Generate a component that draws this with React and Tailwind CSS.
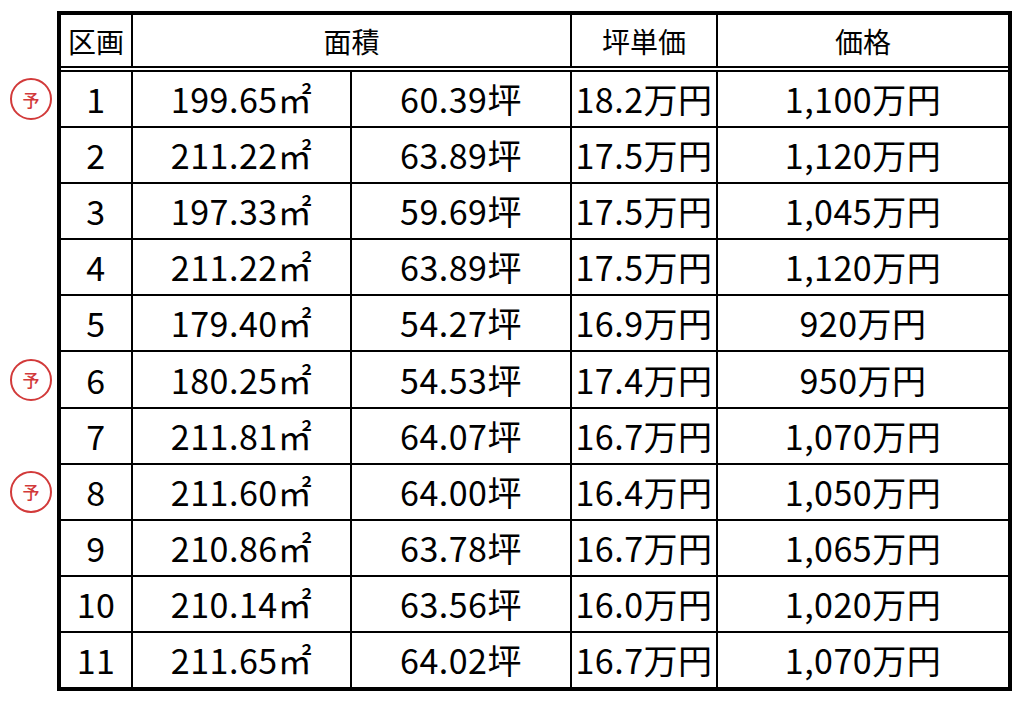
// 区画ごとの面積・坪単価・価格の一覧表
const FONT = "font-['Noto_Sans_CJK_JP','Noto_Sans',sans-serif]";

const rows = [
  { no: "1", m2: "199.65", tsubo: "60.39", unit: "18.2", price: "1,100", yo: true },
  { no: "2", m2: "211.22", tsubo: "63.89", unit: "17.5", price: "1,120" },
  { no: "3", m2: "197.33", tsubo: "59.69", unit: "17.5", price: "1,045" },
  { no: "4", m2: "211.22", tsubo: "63.89", unit: "17.5", price: "1,120" },
  { no: "5", m2: "179.40", tsubo: "54.27", unit: "16.9", price: "920" },
  { no: "6", m2: "180.25", tsubo: "54.53", unit: "17.4", price: "950", yo: true },
  { no: "7", m2: "211.81", tsubo: "64.07", unit: "16.7", price: "1,070" },
  { no: "8", m2: "211.60", tsubo: "64.00", unit: "16.4", price: "1,050", yo: true },
  { no: "9", m2: "210.86", tsubo: "63.78", unit: "16.7", price: "1,065" },
  { no: "10", m2: "210.14", tsubo: "63.56", unit: "16.0", price: "1,020" },
  { no: "11", m2: "211.65", tsubo: "64.02", unit: "16.7", price: "1,070" },
];

function Yo() {
  return (
    <div className="flex h-[42px] w-[42px] shrink-0 items-center justify-center rounded-full border-2 border-[#d23a3a] text-[17px] font-medium leading-none text-[#d23a3a]">
      予
    </div>
  );
}

function Head({ children, span }) {
  return (
    <div
      className={`flex h-[51px] items-center justify-center bg-white text-[28px] leading-none ${
        span ? "col-span-2" : ""
      }`}
    >
      {children}
    </div>
  );
}

function Cell({ children }) {
  return (
    <div className="flex h-[54.1px] items-center justify-center bg-white text-[34px] leading-none tracking-[0.5px]">
      {children}
    </div>
  );
}

export default function App() {
  return (
    <div className={`min-h-screen bg-white text-black ${FONT}`}>
      <div className="flex pt-[11px]">
        {/* 予約済みマーク */}
        <div className="flex w-[57px] flex-col gap-[2px] pt-[61px]">
          {rows.map((r) => (
            <div key={r.no} className="flex h-[54.1px] items-center pl-[10px]">
              {r.yo && <Yo />}
            </div>
          ))}
        </div>

        {/* 表 */}
        <div className="border-4 border-black bg-black">
          <div className="grid grid-cols-[70px_217px_218px_144px_290px] gap-[2px]">
            <Head>区画</Head>
            <Head span>面積</Head>
            <Head>坪単価</Head>
            <Head>価格</Head>
            <div className="col-span-5 h-[2px] bg-white" />
            {rows.map((r) => (
              <div key={r.no} className="contents">
                <Cell>{r.no}</Cell>
                <Cell>{r.m2}㎡</Cell>
                <Cell>{r.tsubo}坪</Cell>
                <Cell>{r.unit}万円</Cell>
                <Cell>{r.price}万円</Cell>
              </div>
            ))}
          </div>
        </div>
      </div>
    </div>
  );
}
